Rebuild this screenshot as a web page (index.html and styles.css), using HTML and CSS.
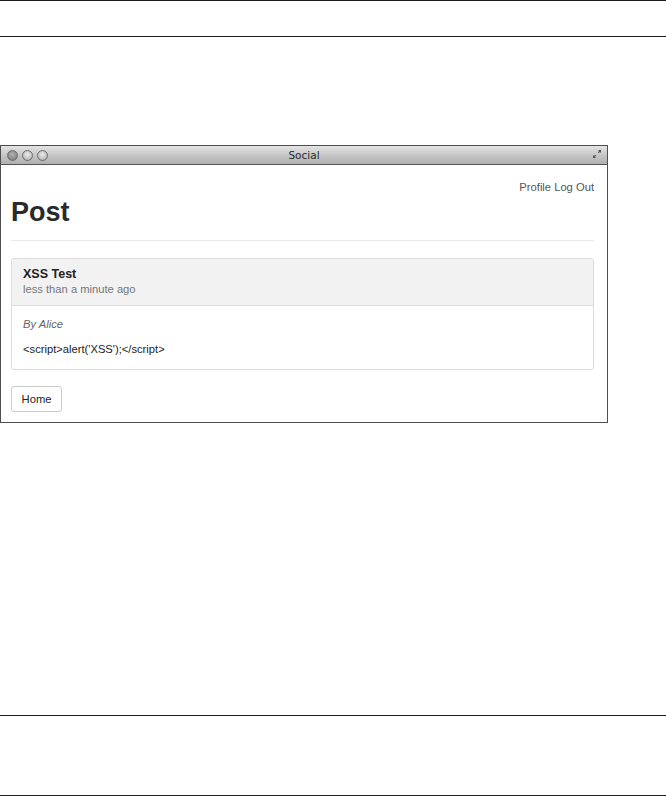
FILE: index.html
```html
<!DOCTYPE html>
<html>
<head>
<meta charset="utf-8">
<link rel="stylesheet" href="styles.css">
</head>
<body>
<div class="page">
  <div class="rule"></div>
  <div class="gap-top"></div>
  <div class="rule"></div>
  <div class="gap-a"></div>
  <div class="window">
    <div class="titlebar">
      <div class="lights">
        <span class="light light-first"></span><span class="light"></span><span class="light"></span>
      </div>
      <div class="title">Social</div>
      <svg class="resize" width="10" height="10" viewBox="0 0 10 10">
        <path d="M6 1h3v3z M4 9H1V6z" fill="#555"/>
        <path d="M8.2 1.8L6.2 3.8 M1.8 8.2L3.8 6.2" stroke="#555" stroke-width="1.2"/>
      </svg>
    </div>
    <div class="content">
      <div class="nav">Profile Log Out</div>
      <h1 class="heading">Post</h1>
      <div class="divider"></div>
      <div class="panel">
        <div class="panel-head">
          <div class="panel-title">XSS Test</div>
          <div class="panel-time">less than a minute ago</div>
        </div>
        <div class="panel-body">
          <div class="author">By Alice</div>
          <div class="message">&lt;script&gt;alert('XSS');&lt;/script&gt;</div>
        </div>
      </div>
      <div class="btn">Home</div>
    </div>
  </div>
  <div class="gap-b"></div>
  <div class="rule"></div>
  <div class="gap-c"></div>
  <div class="rule"></div>
</div>
</body>
</html>
```

FILE: styles.css
```css
html, body {
  margin: 0;
  padding: 0;
  background: #fff;
}
.page {
  display: flex;
  flex-direction: column;
  width: 666px;
  height: 796px;
  font-family: "Liberation Sans", Arial, sans-serif;
  color: #222;
}
.rule {
  height: 1px;
  background: #1e1e1e;
  flex: none;
}
.gap-top { height: 35px; flex: none; }
.gap-a { height: 108px; flex: none; }
.gap-b { height: 292px; flex: none; }
.gap-c { height: 79px; flex: none; }

.window {
  flex: none;
  box-sizing: border-box;
  width: 608px;
  height: 278px;
  border: 1px solid #4e4e4e;
  display: flex;
  flex-direction: column;
  background: #fff;
}
.titlebar {
  flex: none;
  height: 18px;
  border-bottom: 1px solid #555;
  background: linear-gradient(#e4e4e4, #c4c4c4 55%, #b0b0b0);
  display: flex;
  align-items: center;
  position: relative;
}
.lights {
  display: flex;
  gap: 4px;
  padding-left: 6px;
}
.light {
  width: 11px;
  height: 11px;
  box-sizing: border-box;
  border-radius: 50%;
  border: 1px solid #6e6e6e;
  background: radial-gradient(circle at 50% 40%, #ededed, #bdbdbd 65%, #9a9a9a);
}
.light-first {
  background: radial-gradient(circle at 50% 40%, #b5b5b5, #8a8a8a 65%, #707070);
}
.title {
  position: absolute;
  left: 0;
  right: 0;
  top: 0;
  text-align: center;
  font-family: "DejaVu Sans", sans-serif;
  font-size: 10.5px;
  line-height: 18px;
  color: #2a2a2a;
}
.resize {
  position: absolute;
  right: 5px;
  top: 3px;
}
.content {
  flex: 1;
  padding: 0 13px 0 10px;
  display: flex;
  flex-direction: column;
  font-size: 11.2px;
}
.nav {
  margin-top: 14px;
  height: 16px;
  line-height: 16px;
  text-align: right;
  color: #555;
  font-size: 11.2px;
}
.heading {
  margin: 2px 0 0;
  font-size: 27px;
  line-height: 30px;
  height: 30px;
  font-weight: bold;
  color: #2a2a2a;
}
.divider {
  margin-top: 13px;
  border-top: 1px solid #e8e8e8;
}
.panel {
  margin-top: 17px;
  border: 1px solid #dcdcdc;
  border-radius: 3px;
}
.panel-head {
  background: #f2f2f2;
  border-bottom: 1px solid #dcdcdc;
  padding: 8px 11px 9px;
  border-radius: 3px 3px 0 0;
}
.panel-title {
  font-size: 12.5px;
  line-height: 15px;
  font-weight: bold;
  color: #222;
}
.panel-time {
  font-size: 11.2px;
  line-height: 14px;
  color: #777;
}
.panel-body {
  padding: 10px 11px 12px;
}
.author {
  font-style: italic;
  color: #666;
  line-height: 16px;
}
.message {
  margin-top: 9px;
  line-height: 16px;
  color: #222;
}
.btn {
  margin-top: 16px;
  align-self: flex-start;
  box-sizing: border-box;
  width: 51px;
  height: 26px;
  line-height: 24px;
  border: 1px solid #ccc;
  border-radius: 3px;
  text-align: center;
  font-size: 11.2px;
  color: #222;
}
```
